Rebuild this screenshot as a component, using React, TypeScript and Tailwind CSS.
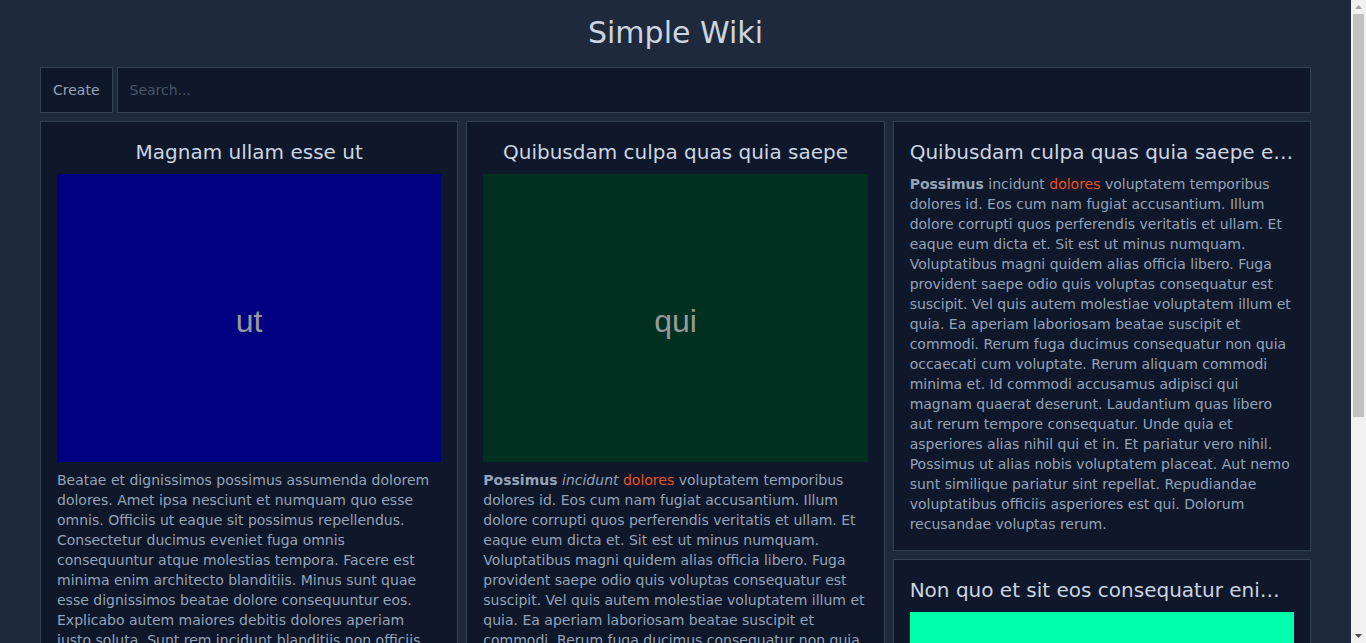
import React from "react";

interface Article {
  title: string;
  image?: { bg: string; label: string };
  body: React.ReactNode;
}

const possimusRest =
  " voluptatem temporibus dolores id. Eos cum nam fugiat accusantium. Illum dolore corrupti quos perferendis veritatis et ullam. Et eaque eum dicta et. Sit est ut minus numquam. Voluptatibus magni quidem alias officia libero. Fuga provident saepe odio quis voluptas consequatur est suscipit. Vel quis autem molestiae voluptatem illum et quia. Ea aperiam laboriosam beatae suscipit et commodi. Rerum fuga ducimus consequatur non quia occaecati cum voluptate. Rerum aliquam commodi minima et. Id commodi accusamus adipisci qui magnam quaerat deserunt. Laudantium quas libero aut rerum tempore consequatur. Unde quia et asperiores alias nihil qui et in. Et pariatur vero nihil. Possimus ut alias nobis voluptatem placeat. Aut nemo sunt similique pariatur sint repellat. Repudiandae voluptatibus officiis asperiores est qui. Dolorum recusandae voluptas rerum.";

const columns: Article[][] = [
  [
    {
      title: "Magnam ullam esse ut",
      image: { bg: "bg-[#000080]", label: "ut" },
      body: (
        <>
          Beatae et dignissimos possimus assumenda dolorem dolores. Amet ipsa nesciunt et numquam quo esse omnis. Officiis ut
          eaque sit possimus repellendus. Consectetur ducimus eveniet fuga omnis consequuntur atque molestias tempora. Facere
          est minima enim architecto blanditiis. Minus sunt quae esse dignissimos beatae dolore consequuntur eos. Explicabo
          autem maiores debitis dolores aperiam iusto soluta. Sunt rem incidunt blanditiis non officiis. Quia ut ipsam sed
          dolores. Nihil voluptatem sit eos et.
        </>
      ),
    },
  ],
  [
    {
      title: "Quibusdam culpa quas quia saepe",
      image: { bg: "bg-[#003020]", label: "qui" },
      body: (
        <>
          <strong className="font-bold">Possimus</strong> <em>incidunt</em>{" "}
          <span className="text-[#e8521f]">dolores</span>
          {possimusRest}
        </>
      ),
    },
  ],
  [
    {
      title: "Quibusdam culpa quas quia saepe et voluptas",
      body: (
        <>
          <strong className="font-bold">Possimus</strong> incidunt{" "}
          <span className="text-[#e8521f]">dolores</span>
          {possimusRest}
        </>
      ),
    },
    {
      title: "Non quo et sit eos consequatur enim dolorem",
      image: { bg: "bg-[#00ffaa]", label: "non" },
      body: <>Quo et sit eos consequatur enim dolorem. Aut voluptas ut rerum nihil quis. Sed et quia nobis dolor sit.</>,
    },
  ],
];

function Card({ article }: { article: Article }) {
  return (
    <div className="border border-[#334155] bg-[#0f172a] p-4">
      <h2 className="truncate text-center text-xl leading-7 text-[#cbd5e1]">{article.title}</h2>
      {article.image && (
        <div
          className={`mt-2 flex h-[288px] w-full items-center justify-center pt-[6px] ${article.image.bg} font-['Liberation_Sans',Arial,sans-serif] text-[32px] text-[#999999]`}
        >
          {article.image.label}
        </div>
      )}
      <p className="mt-2 text-sm leading-5 text-[#94a3b8]">{article.body}</p>
    </div>
  );
}

// fake browser scrollbar, the reference shows the page scrolled at top
function Scrollbar() {
  return (
    <aside className="sticky top-0 flex h-screen w-[15px] shrink-0 flex-col items-center self-start bg-[#f1f1f1]">
      <div className="flex h-[14px] w-full items-center justify-center">
        <svg width="7" height="4" viewBox="0 0 7 4">
          <path d="M0 4 L3.5 0 L7 4 Z" fill="#a3a3a3" />
        </svg>
      </div>
      <div className="h-[403px] w-[11px] bg-[#c1c1c1]" />
      <div className="flex-1" />
      <div className="flex h-[14px] w-full items-center justify-center">
        <svg width="7" height="4" viewBox="0 0 7 4">
          <path d="M0 0 L7 0 L3.5 4 Z" fill="#505050" />
        </svg>
      </div>
    </aside>
  );
}

export default function App() {
  return (
    <div className="flex min-h-screen bg-[#1e293b] font-['DejaVu_Sans',sans-serif]">
      <main className="min-w-0 flex-1 px-10 pb-10">
        <h1 className="pt-[15px] pb-[16px] text-center text-[30px] leading-9 text-[#cbd5e1]">Simple Wiki</h1>
        <div className="flex h-[46px] gap-1">
          <button className="border border-[#334155] bg-[#0f172a] px-3 text-sm text-[#94a3b8]">Create</button>
          <input
            className="flex-1 border border-[#334155] bg-[#0f172a] px-3 text-sm text-[#94a3b8] outline-none placeholder:text-[#475569]"
            placeholder="Search..."
          />
        </div>
        <div className="mt-2 grid grid-cols-3 items-start gap-2">
          {columns.map((col, i) => (
            <div key={i} className="flex flex-col gap-2">
              {col.map((a, j) => (
                <Card key={j} article={a} />
              ))}
            </div>
          ))}
        </div>
      </main>
      <Scrollbar />
    </div>
  );
}
